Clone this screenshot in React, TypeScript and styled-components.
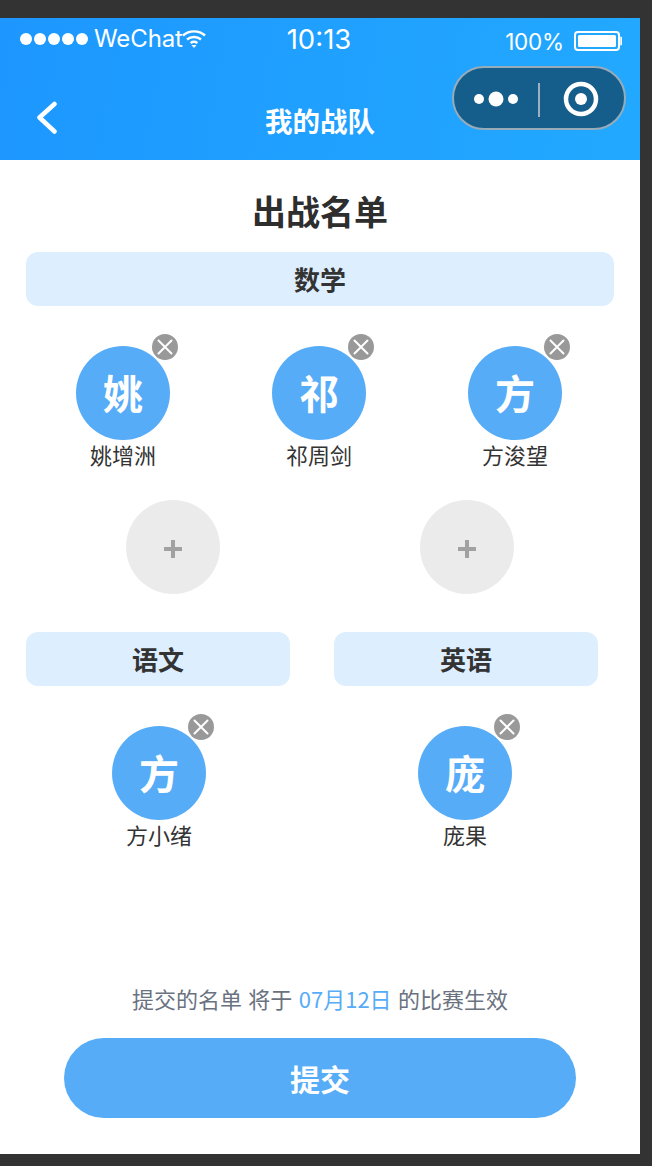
import React from "react";
import styled, { createGlobalStyle } from "styled-components";

const Global = createGlobalStyle`
  html, body { margin: 0; padding: 0; background: #333333; }
  body { font-family: "Inter", "Noto Sans CJK SC", sans-serif; }
  * { box-sizing: border-box; }
`;
const Frame = styled.div`
  width: 652px; height: 1166px; padding: 18px 12px 12px 0;
  background: #333333; overflow: hidden;
`;
const Phone = styled.div`
  width: 640px; height: 1136px; background: #fff; display: flex; flex-direction: column;
`;
const Header = styled.header`
  height: 142px; background: linear-gradient(100deg, #1d97ff 0%, #22a9ff 100%);
  color: #fff; position: relative; flex: none;
`;
const StatusBar = styled.div`
  height: 42px; display: grid; grid-template-columns: 1fr auto 1fr; align-items: center; padding: 0 18px 0 20px;
`;
const StatusLeft = styled.div`display: flex; align-items: center; gap: 6px;`;
const Dots = styled.div`display: flex; gap: 2px;`;
const Dot = styled.span`width: 12px; height: 12px; border-radius: 50%; background: #fff;`;
const Carrier = styled.span`font: 400 24px/30px "Inter", sans-serif; margin-right: -7px; letter-spacing: -0.1px;`;
const Clock = styled.span`font: 400 27.5px/30px "Inter", sans-serif; position: relative; left: -2px;`;
const StatusRight = styled.div`display: flex; align-items: center; justify-content: flex-end; gap: 10px; margin-top: 4px;`;
const Percent = styled.span`font: 400 22.5px/30px "Inter", sans-serif; letter-spacing: -0.2px; margin-top: 1px;`;
const NavRow = styled.div`height: 100px; display: flex; align-items: center; justify-content: center; position: relative;`;
const Back = styled.svg`position: absolute; left: 36px; top: 41px;`;
const NavTitle = styled.h1`margin: 20px 0 0; font: 700 27.5px/40px "Noto Sans CJK SC", sans-serif;`;
const Capsule = styled.div`
  position: absolute; left: 452px; top: 48px; width: 174px; height: 64px; border-radius: 32px;
  background: #155d8a; border: 2px solid #98abb9; display: flex; align-items: center;
`;
const Content = styled.main`flex: 1; display: flex; flex-direction: column; padding: 0 26px;`;
const Title = styled.h2`margin: 29px 0 19px; height: 44px; text-align: center; color: #2e2e2e; font: 700 34px/44px "Noto Sans CJK SC", sans-serif;`;
const SubjectBar = styled.div`
  height: 54px; border-radius: 12px; background: #ddeeff; color: #333; display: flex; align-items: center; justify-content: center;
  font: 700 26px/54px "Noto Sans CJK SC", sans-serif;
`;
const Trio = styled.div`display: grid; grid-template-columns: repeat(3, 196px); margin: 40px 0 0 -1px; height: 154px;`;
const Pair = styled.div`display: grid; grid-template-columns: repeat(2, 294px); height: 94px; justify-items: center;`;
const Member = styled.div`display: flex; flex-direction: column; align-items: center;`;
const Avatar = styled.div`
  width: 94px; height: 94px; padding-bottom: 3px; border-radius: 50%; background: #57acf7; color: #fff; position: relative;
  display: flex; align-items: center; justify-content: center; font: 700 40px/88px "Noto Sans CJK SC", sans-serif;
`;
const Remove = styled.svg`position: absolute; right: -8px; top: -12px;`;
const Name = styled.div`color: #333; font: 400 22px/32px "Noto Sans CJK SC", sans-serif; margin-top: -2px;`;
const AddCircle = styled.div`
  width: 94px; height: 94px; border-radius: 50%; background: #ebebeb; display: flex; align-items: center; justify-content: center;
`;
const PlusIcon = styled.svg`margin-top: 4px;`;
const Subjects = styled.div`display: grid; grid-template-columns: 264px 264px; column-gap: 44px; margin-top: 38px;`;
const SubjectCol = styled.section`display: flex; flex-direction: column;`;
const Single = styled.div<{ $shift: number }>`
  display: flex; justify-content: center; margin-top: 40px;
  padding-left: ${(p) => (p.$shift > 0 ? p.$shift * 2 : 0)}px;
  padding-right: ${(p) => (p.$shift < 0 ? -p.$shift * 2 : 0)}px;
`;
const Note = styled.p`
  margin: 132px 0 0; height: 32px; text-align: center; color: #6a7280; font: 400 22px/32px "Noto Sans CJK SC", sans-serif;
  white-space: pre; word-spacing: 1.5px;
`;
const DateText = styled.span`color: #57acf7;`;
const Submit = styled.button`
  display: block; width: 512px; height: 80px; margin: 24px 0 0 38px; border: 0; border-radius: 40px; background: #57acf7; color: #fff;
  font: 700 30px/80px "Noto Sans CJK SC", sans-serif; padding: 0;
`;

const RemoveIcon = () => (
  <Remove width="26" height="26" viewBox="0 0 26 26" aria-hidden>
    <circle cx="13" cy="13" r="13" fill="#999999" />
    <path d="M6.500 6.500 19.500 19.500M19.500 6.500 6.500 19.500" stroke="#fff" strokeWidth="2" strokeLinecap="round" />
  </Remove>
);
const PersonCard = ({ name }: { name: string }) => (
  <Member>
    <Avatar>{name[0]}<RemoveIcon /></Avatar>
    <Name>{name}</Name>
  </Member>
);
const Plus = () => (
  <PlusIcon width="18" height="18" viewBox="0 0 18 18" aria-hidden>
    <path d="M0 9h18M9 0v18" stroke="#a1a1a1" strokeWidth="4" />
  </PlusIcon>
);

export default function App() {
  return (
    <Frame>
      <Global />
      <Phone>
        <Header>
          <StatusBar>
            <StatusLeft>
              <Dots>{[0, 1, 2, 3, 4].map((i) => <Dot key={i} />)}</Dots>
              <Carrier>WeChat</Carrier>
              <svg width="24" height="20" viewBox="0 0 24 20" aria-hidden fill="none" stroke="#fff" strokeWidth="2.400">
                <path d="M1 6.500C7 1 17 1 23 6.500" />
                <path d="M5 10.500c4-3.400 10-3.400 14 0" />
                <path d="M8.600 14c2-1.400 4.800-1.400 6.800 0" />
                <path d="M9.500 16 12 19l2.500-3z" fill="#fff" stroke="none" />
              </svg>
            </StatusLeft>
            <Clock>10:13</Clock>
            <StatusRight>
              <Percent>100%</Percent>
              <svg width="48" height="20" viewBox="0 0 48 20" aria-hidden>
                <rect x="1" y="1" width="44" height="18" rx="3" fill="none" stroke="#fff" strokeWidth="2" />
                <rect x="4" y="4" width="38" height="12" rx="1.500" fill="#fff" />
                <path d="M47 6.500c1.500.3 1.500 6.700 0 7z" fill="#fff" stroke="#fff" strokeWidth="1.500" />
              </svg>
            </StatusRight>
          </StatusBar>
          <NavRow>
            <Back width="24" height="34" viewBox="0 0 24 34" aria-hidden fill="none" stroke="#fff" strokeWidth="4.500" strokeLinecap="round" strokeLinejoin="round">
              <path d="M18.500 3 3.500 16.500l15 14" />
            </Back>
            <NavTitle>我的战队</NavTitle>
          </NavRow>
          <Capsule>
            <svg width="170" height="60" viewBox="0 0 170 60" aria-hidden>
              <circle cx="25" cy="31" r="5" fill="#fff" />
              <circle cx="42" cy="31" r="7.500" fill="#fff" />
              <circle cx="59" cy="31" r="5" fill="#fff" />
              <path d="M85 15v34" stroke="#9db0bf" strokeWidth="2" />
              <circle cx="127" cy="31" r="15" fill="none" stroke="#fff" strokeWidth="4.500" />
              <circle cx="127" cy="31" r="6" fill="#fff" />
            </svg>
          </Capsule>
        </Header>
        <Content>
          <Title>出战名单</Title>
          <SubjectBar>数学</SubjectBar>
          <Trio>
            <PersonCard name="姚增洲" />
            <PersonCard name="祁周剑" />
            <PersonCard name="方浚望" />
          </Trio>
          <Pair>
            <AddCircle><Plus /></AddCircle>
            <AddCircle><Plus /></AddCircle>
          </Pair>
          <Subjects>
            <SubjectCol>
              <SubjectBar>语文</SubjectBar>
              <Single $shift={1}><PersonCard name="方小绪" /></Single>
            </SubjectCol>
            <SubjectCol>
              <SubjectBar>英语</SubjectBar>
              <Single $shift={-1}><PersonCard name="庞果" /></Single>
            </SubjectCol>
          </Subjects>
          <Note>提交的名单 将于 <DateText>07月12日</DateText> 的比赛生效</Note>
          <Submit>提交</Submit>
        </Content>
      </Phone>
    </Frame>
  );
}
